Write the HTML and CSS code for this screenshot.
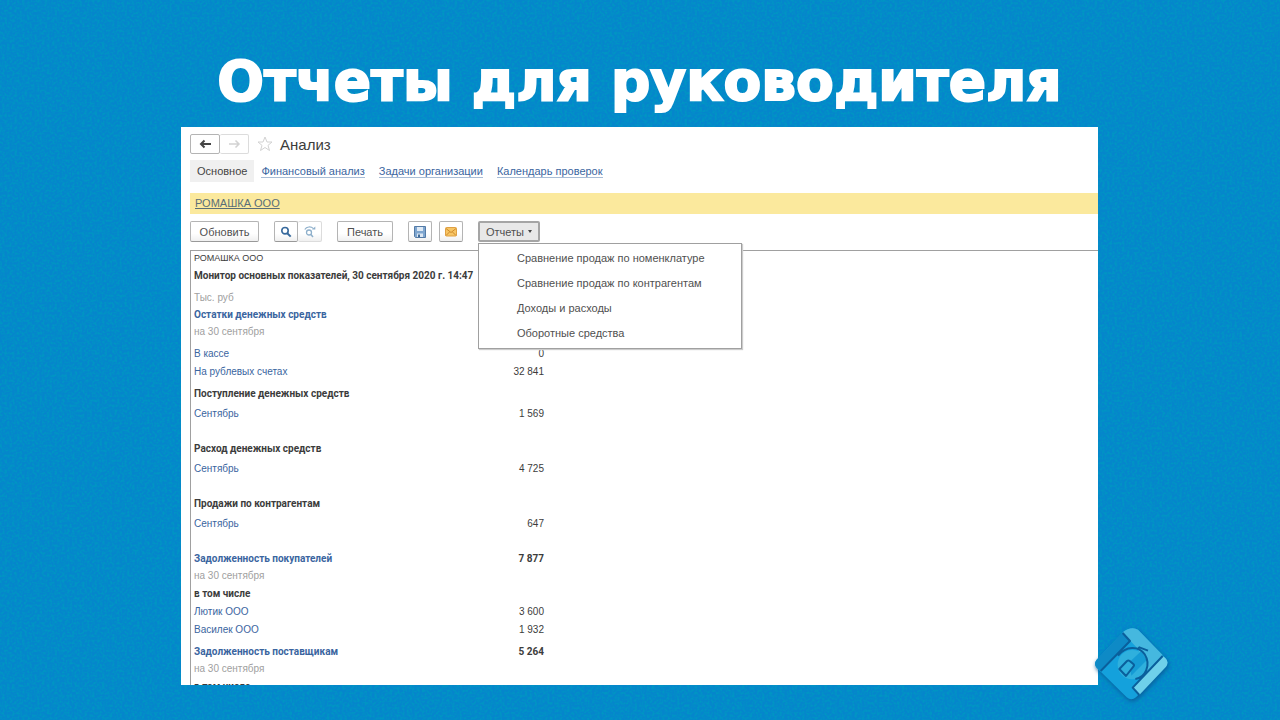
FILE: index.html
```
<!DOCTYPE html>
<html lang="ru">
<head>
    <meta charset="UTF-8">
    <meta name="viewport" content="width=device-width, initial-scale=1.0">
    <title>Отчеты для руководителя</title>
    <link rel="stylesheet" href="styles.css">
</head>
<body>
    <svg class="grain" aria-hidden="true">
        <filter id="noise" x="0" y="0" width="100%" height="100%">
            <feTurbulence type="fractalNoise" baseFrequency="0.4" numOctaves="2" seed="4"/>
            <feColorMatrix values="0 0 0 0 0  0 0 0 0 0.3  0 0 0 0 0.55  3 0 0 0 -1.2"/>
        </filter>
        <rect width="100%" height="100%" filter="url(#noise)"/>
    </svg>

    <main class="slide">
        <h1>Отчеты для руководителя</h1>

        <section class="window">
            <header class="window-header">
                <div class="button-pair">
                    <button class="nav-button" aria-label="Назад">
                        <svg width="13" height="10" viewBox="0 0 13 10"><path d="M12 5H3M5.5 1.5L2 5l3.500 3.500" fill="none" stroke="#444" stroke-width="2"/></svg>
                    </button>
                    <button class="nav-button disabled" aria-label="Вперед" disabled>
                        <svg width="13" height="10" viewBox="0 0 13 10"><path d="M1 5h9M7.500 1.500L11 5 7.500 8.500" fill="none" stroke="#d2d2d2" stroke-width="1.500"/></svg>
                    </button>
                </div>
                <button class="star" aria-label="В избранное">
                    <svg width="16" height="16" viewBox="0 0 16 16"><path d="M8 1l2 5h5l-4 3.400 1.500 5.100L8 11.500l-4.500 3L5 9.400 1 6h5z" fill="#fff" stroke="#d2d2d2"/></svg>
                </button>
                <h2>Анализ</h2>
            </header>

            <nav class="tabs">
                <a class="tab active" href="#">Основное</a>
                <a class="tab" href="#"><span>Финансовый анализ</span></a>
                <a class="tab" href="#"><span>Задачи организации</span></a>
                <a class="tab" href="#"><span>Календарь проверок</span></a>
            </nav>

            <div class="company"><a href="#">РОМАШКА ООО</a></div>

            <div class="toolbar">
                <button class="tool refresh">Обновить</button>
                <div class="button-pair">
                    <button class="tool icon" aria-label="Найти">
                        <svg width="12" height="12" viewBox="0 0 12 12"><circle cx="5" cy="4.700" r="3.200" fill="none" stroke="#37699c" stroke-width="1.600"/><path d="M7.300 7.200l3.400 3.400" stroke="#37699c" stroke-width="2"/></svg>
                    </button>
                    <button class="tool icon disabled" aria-label="Отменить поиск" disabled>
                        <svg width="12" height="12" viewBox="0 0 12 12"><g fill="none" stroke="#8fb0cb"><circle cx="5" cy="6.500" r="2.500" stroke-width="1.300"/><path d="M6.700 8.200l2.300 2.800" stroke-width="1.500"/><path d="M.8 3.500C2.500.3 7 .3 9.500 2.600" stroke-width="1.200"/><path d="M8 3.500h3.300V.5z" fill="#8fb0cb" stroke="none"/></g></svg>
                    </button>
                </div>
                <button class="tool print">Печать</button>
                <div class="icon-tools">
                    <button class="tool icon" aria-label="Сохранить">
                        <svg width="12" height="12" viewBox="0 0 12 12"><path d="M.5 .5h11v11h-10l-1-1z" fill="#7fa6cf" stroke="#547ba6"/><path d="M3 1h6v4H3z" fill="#dfeaf5"/><path d="M3 7.500h6V11H3z" fill="#dce7f2"/><path d="M4 8.500h2V11H4z" fill="#416b98"/></svg>
                    </button>
                    <button class="tool icon" aria-label="Отправить">
                        <svg width="12" height="10" viewBox="0 0 12 10"><rect x=".5" y=".5" width="11" height="8.500" rx="1" fill="#f7c565" stroke="#dfa043"/><path d="M1 1.500l5 4 5-4M1 8.500l3.500-3.500M11 8.500L7.500 5" fill="none" stroke="#cf8a2a"/></svg>
                    </button>
                </div>
                <div class="reports">
                    <button class="tool reports-button" aria-haspopup="menu" aria-expanded="true">Отчеты <span class="caret"></span></button>
                    <div class="menu" role="menu">
                        <button role="menuitem">Сравнение продаж по номенклатуре</button>
                        <button role="menuitem">Сравнение продаж по контрагентам</button>
                        <button role="menuitem">Доходы и расходы</button>
                        <button role="menuitem">Оборотные средства</button>
                    </div>
                </div>
            </div>

            <div class="report">
                <table>
                    <tr class="first"><td colspan="2">РОМАШКА ООО</td></tr>
                    <tr class="item strong"><td colspan="2">Монитор основных показателей, 30 сентября 2020 г. 14:47</td></tr>
                    <tr class="lead muted"><td colspan="2">Тыс. руб</td></tr>
                    <tr class="note strong"><td colspan="2"><a href="#">Остатки денежных средств</a></td></tr>
                    <tr class="note muted"><td colspan="2">на 30 сентября</td></tr>
                    <tr class="lead"><td><a href="#">В кассе</a></td><td>0</td></tr>
                    <tr class="item"><td><a href="#">На рублевых счетах</a></td><td>32 841</td></tr>
                    <tr class="lead strong"><td colspan="2">Поступление денежных средств</td></tr>
                    <tr class="month"><td><a href="#">Сентябрь</a></td><td>1 569</td></tr>
                    <tr class="group strong"><td colspan="2">Расход денежных средств</td></tr>
                    <tr class="month"><td><a href="#">Сентябрь</a></td><td>4 725</td></tr>
                    <tr class="group strong"><td colspan="2">Продажи по контрагентам</td></tr>
                    <tr class="month"><td><a href="#">Сентябрь</a></td><td>647</td></tr>
                    <tr class="group strong"><td><a href="#">Задолженность покупателей</a></td><td>7 877</td></tr>
                    <tr class="note muted"><td colspan="2">на 30 сентября</td></tr>
                    <tr class="item strong"><td colspan="2">в том числе</td></tr>
                    <tr class="item"><td><a href="#">Лютик ООО</a></td><td>3 600</td></tr>
                    <tr class="item"><td><a href="#">Василек ООО</a></td><td>1 932</td></tr>
                    <tr class="lead strong"><td><a href="#">Задолженность поставщикам</a></td><td>5 264</td></tr>
                    <tr class="note muted"><td colspan="2">на 30 сентября</td></tr>
                    <tr class="item strong"><td colspan="2">в том числе</td></tr>
                </table>
            </div>
        </section>
    </main>

    <svg class="logo" viewBox="0 0 234 234" aria-hidden="true">
        <path d="M88 20L8 104Q-2 117 8 128L98 217Q112 229 126 217L216 125Q226 111 214 99L132 14Q112 2 88 20z" fill="#14a1dc"/>
        <path d="M84 24L8 104Q-2 117 8 128L20 138 110 48z" fill="#0e8ac6"/>
        <path d="M86 22Q112 2 132 14L206 90 160 140 130 70 106 44z" fill="#45b8df"/>
        <path d="M116 188L206 93 214 99Q226 111 216 125L136 210z" fill="#6fd0ea"/>
        <circle cx="115" cy="119" r="44" fill="#2fb0dd"/>
        <path d="M106 112L142 78l16 28-46 46z" fill="#159bd4"/>
        <path d="M76 132L99 108q4-3 8 0l11 9q4 4 0 8L96 153z" fill="#2fb0dd"/>
        <g fill="none" stroke="#0a5f9c" stroke-width="6" stroke-linejoin="round">
            <path d="M86 24l22 24L20 138M72 92C96 62 134 62 152 88c20 32 2 70-28 74M130 73l6-6 26 10M206 93l-90 95 20 22"/>
            <path d="M76 132L99 108q4-3 8 0l11 9q4 4 0 8L96 153z"/>
        </g>
    </svg>
</body>
</html>
```
FILE: styles.css
```
* {
    margin: 0;
    padding: 0;
    box-sizing: border-box;
    font-family: "Liberation Sans", Arial, sans-serif;
}

body {
    height: 100vh;
    overflow: hidden;
    background: #0586cb;
}

button {
    border: none;
    background: none;
    color: #505050;
    font-size: 11px;
}

a {
    color: #3a65a0;
    text-decoration: none;
}

/* Background */
.grain {
    position: absolute;
    width: 100%;
    height: 100%;
}

.slide {
    position: relative;
    display: flex;
    flex-direction: column;
    height: 100vh;
    padding: 44px 182px 35px 181px;
}

h1 {
    flex: none;
    height: 83px;
    line-height: 74px;
    color: #fff;
    font-family: "DejaVu Sans", sans-serif;
    font-size: 55px;
    font-weight: bold;
    text-align: center;
    white-space: nowrap;
    -webkit-text-stroke: 2px #fff;
}

/* Application window */
.window {
    flex: 1;
    display: flex;
    flex-direction: column;
    min-height: 0;
    padding: 7px 0 0 9px;
    background: #fff;
    color: #3c3c3c;
    font-size: 11px;
}

.window-header {
    display: flex;
    align-items: center;
    height: 20px;
}

.button-pair {
    display: flex;
}

.nav-button {
    display: flex;
    align-items: center;
    justify-content: center;
    width: 30px;
    height: 20px;
    border: 1px solid #b4b4b4;
    border-radius: 2px;
}

.nav-button.disabled {
    width: 29px;
    border-color: #dcdcdc;
    border-left: none;
}

.star {
    display: flex;
    margin: 0 7px 0 8px;
}

h2 {
    font-size: 15px;
    font-weight: normal;
}

/* Tabs */
.tabs {
    display: flex;
    margin-top: 6px;
}

.tab {
    padding: 0 7px;
    line-height: 22px;
}

.tab.active {
    background: #f0f0f0;
    color: #444;
}

.tab span {
    border-bottom: 1px solid #a9bdd6;
}

.company {
    margin-top: 11px;
    padding-left: 5px;
    background: #fbe99d;
    line-height: 21px;
}

.company a {
    color: #5a6e78;
    text-decoration: underline;
}

/* Toolbar */
.toolbar {
    display: flex;
    gap: 15px;
    margin-top: 7px;
}

.tool {
    display: flex;
    align-items: center;
    justify-content: center;
    height: 21px;
    border: 1px solid #b4b4b4;
    border-bottom-color: #999;
    border-radius: 2px;
    background: linear-gradient(#fff 60%, #f0f0f0);
}

.refresh {
    width: 69px;
}

.print {
    width: 56px;
}

.icon {
    width: 24px;
}

.icon.disabled {
    border-color: #dcdcdc;
    border-left: none;
}

.icon-tools {
    display: flex;
    gap: 7px;
}

.reports {
    position: relative;
}

.reports-button {
    gap: 4px;
    width: 62px;
    border: 2px solid #a5a5a5;
    background: #e8e8e8;
}

.caret {
    border: 2px solid transparent;
    border-top: 3px solid #444;
    border-bottom: none;
}

.menu {
    position: absolute;
    top: 22px;
    left: 0;
    z-index: 1;
    display: flex;
    flex-direction: column;
    width: 264px;
    padding: 2px 0;
    border: 1px solid #a0a0a0;
    background: #fff;
    box-shadow: 1px 1px 1px #ccc;
}

.menu button {
    padding-left: 38px;
    line-height: 25px;
    text-align: left;
}

/* Report */
.report {
    flex: 1;
    min-height: 0;
    margin-top: 8px;
    overflow: hidden;
    border: 1px solid #a0a0a0;
    border-width: 1px 0 0 1px;
}

table {
    width: 353px;
    border-collapse: collapse;
    font-size: 10px;
    line-height: 14px;
}

td {
    padding-left: 3px;
    vertical-align: bottom;
}

td + td {
    text-align: right;
}

.first { height: 14px; font-size: 9px; }
.note { height: 17px; }
.item { height: 18px; }
.month { height: 20px; }
.lead { height: 22px; }
.group { height: 35px; }

.strong td,
.strong a {
    font-family: Roboto, "Liberation Sans", sans-serif;
    font-weight: bold;
}

.muted {
    color: #a0a0a0;
}

/* Logo */
.logo {
    position: absolute;
    right: 108px;
    bottom: 17px;
    width: 78px;
    height: 78px;
    filter: drop-shadow(1px 2px 2px #0a5f9c);
}
```
